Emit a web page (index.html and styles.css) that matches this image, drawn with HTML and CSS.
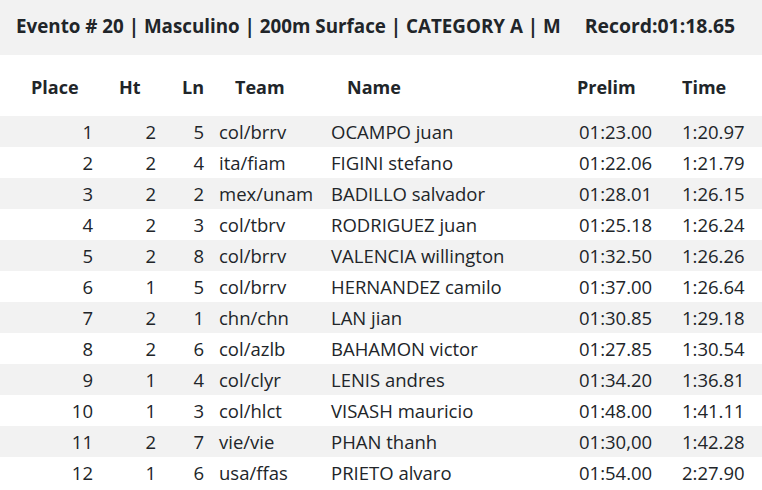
FILE: index.html
```html
<!DOCTYPE html>
<html>
<head>
<meta charset="utf-8">
<link rel="stylesheet" href="styles.css">
</head>
<body>
<div class="title">
  <span class="event">Evento # 20 | Masculino | 200m Surface | CATEGORY A | M</span>
  <span class="record">Record:01:18.65</span>
</div>
<div class="table">
  <div class="row head">
    <div class="c1">Place</div><div class="c2">Ht</div><div class="c3">Ln</div><div class="c4">Team</div><div class="c5">Name</div><div class="c6">Prelim</div><div class="c7">Time</div>
  </div>
  <div class="row"><div class="c1">1</div><div class="c2">2</div><div class="c3">5</div><div class="c4">col/brrv</div><div class="c5">OCAMPO juan</div><div class="c6">01:23.00</div><div class="c7">1:20.97</div></div>
  <div class="row"><div class="c1">2</div><div class="c2">2</div><div class="c3">4</div><div class="c4">ita/fiam</div><div class="c5">FIGINI stefano</div><div class="c6">01:22.06</div><div class="c7">1:21.79</div></div>
  <div class="row"><div class="c1">3</div><div class="c2">2</div><div class="c3">2</div><div class="c4">mex/unam</div><div class="c5">BADILLO salvador</div><div class="c6">01:28.01</div><div class="c7">1:26.15</div></div>
  <div class="row"><div class="c1">4</div><div class="c2">2</div><div class="c3">3</div><div class="c4">col/tbrv</div><div class="c5">RODRIGUEZ juan</div><div class="c6">01:25.18</div><div class="c7">1:26.24</div></div>
  <div class="row"><div class="c1">5</div><div class="c2">2</div><div class="c3">8</div><div class="c4">col/brrv</div><div class="c5">VALENCIA willington</div><div class="c6">01:32.50</div><div class="c7">1:26.26</div></div>
  <div class="row"><div class="c1">6</div><div class="c2">1</div><div class="c3">5</div><div class="c4">col/brrv</div><div class="c5">HERNANDEZ camilo</div><div class="c6">01:37.00</div><div class="c7">1:26.64</div></div>
  <div class="row"><div class="c1">7</div><div class="c2">2</div><div class="c3">1</div><div class="c4">chn/chn</div><div class="c5">LAN jian</div><div class="c6">01:30.85</div><div class="c7">1:29.18</div></div>
  <div class="row"><div class="c1">8</div><div class="c2">2</div><div class="c3">6</div><div class="c4">col/azlb</div><div class="c5">BAHAMON victor</div><div class="c6">01:27.85</div><div class="c7">1:30.54</div></div>
  <div class="row"><div class="c1">9</div><div class="c2">1</div><div class="c3">4</div><div class="c4">col/clyr</div><div class="c5">LENIS andres</div><div class="c6">01:34.20</div><div class="c7">1:36.81</div></div>
  <div class="row"><div class="c1">10</div><div class="c2">1</div><div class="c3">3</div><div class="c4">col/hlct</div><div class="c5">VISASH mauricio</div><div class="c6">01:48.00</div><div class="c7">1:41.11</div></div>
  <div class="row"><div class="c1">11</div><div class="c2">2</div><div class="c3">7</div><div class="c4">vie/vie</div><div class="c5">PHAN thanh</div><div class="c6">01:30,00</div><div class="c7">1:42.28</div></div>
  <div class="row"><div class="c1">12</div><div class="c2">1</div><div class="c3">6</div><div class="c4">usa/ffas</div><div class="c5">PRIETO alvaro</div><div class="c6">01:54.00</div><div class="c7">2:27.90</div></div>
</div>
</body>
</html>
```
FILE: styles.css
```css
* { box-sizing: border-box; }
html, body { margin: 0; padding: 0; background: #fff; }
body {
  font-family: "Open Sans", "Noto Sans", sans-serif;
  color: #212529;
  font-size: 18.5px;
}
.title {
  background: #f2f2f2;
  height: 55px;
  display: flex;
  align-items: center;
  padding-left: 16px;
  padding-bottom: 4px;
  font-weight: 700;
  font-size: 18.8px;
  white-space: nowrap;
}
.record { margin-left: 24px; font-size: 19.4px; }
.table { display: flex; flex-direction: column; }
.row {
  display: grid;
  grid-template-columns: 100px 65px 47px 113px 245px 105px 87px;
  height: 31px;
  align-items: center;
  white-space: nowrap;
  padding-top: 2px;
}
.row:nth-child(even) { background: #f2f2f2; }
.row.head {
  height: 61px;
  font-weight: 700;
  font-size: 18px;
  background: #fff;
  padding-top: 2px;
}
.row > div { line-height: 1; }
.c1, .c2, .c3 { text-align: right; }
.c1 { padding-right: 7px; }
.c2 { padding-right: 9px; }
.c3 { padding-right: 8px; }
.c4 { padding-left: 7px; }
.c5 { padding-left: 6px; }
.c6 { padding-left: 9px; }
.c7 { padding-left: 7px; }
.head > div { text-align: left; padding-right: 0; }
.head .c1 { padding-left: 31px; }
.head .c2 { padding-left: 19px; }
.head .c3 { padding-left: 17px; }
.head .c4 { padding-left: 23px; }
.head .c5 { padding-left: 22px; }
.head .c6 { padding-left: 7px; }
.head .c7 { padding-left: 7px; }
```
